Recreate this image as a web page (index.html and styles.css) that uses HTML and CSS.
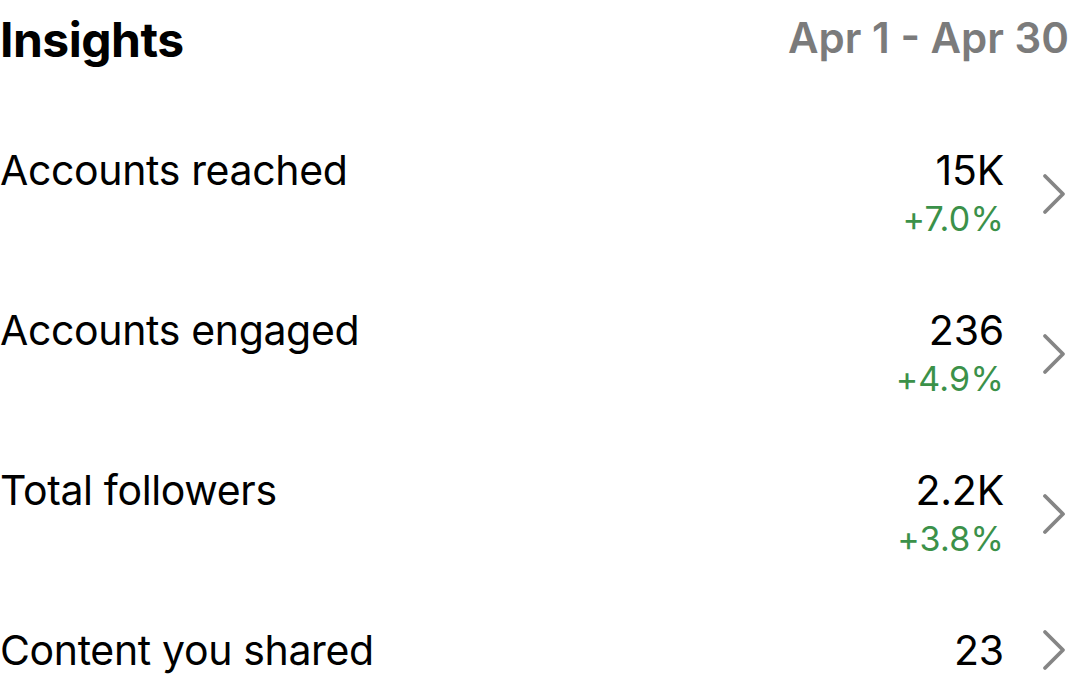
FILE: index.html
```html
<!DOCTYPE html>
<html lang="en">
<head>
<meta charset="utf-8">
<title>Insights</title>
<link rel="stylesheet" href="styles.css">
</head>
<body>
<div class="page">
  <header class="header">
    <h1 class="title">Insights</h1>
    <div class="range">Apr 1 - Apr 30</div>
  </header>
  <ul class="list">
    <li class="row">
      <span class="label">Accounts reached</span>
      <div class="right">
        <div class="values">
          <span class="value">15K</span>
          <span class="delta">+7.0%</span>
        </div>
        <svg class="chev" viewBox="0 0 24 42" width="24" height="42"><path d="M3 3 L21 21 L3 39" /></svg>
      </div>
    </li>
    <li class="row">
      <span class="label">Accounts engaged</span>
      <div class="right">
        <div class="values">
          <span class="value">236</span>
          <span class="delta">+4.9%</span>
        </div>
        <svg class="chev" viewBox="0 0 24 42" width="24" height="42"><path d="M3 3 L21 21 L3 39" /></svg>
      </div>
    </li>
    <li class="row">
      <span class="label">Total followers</span>
      <div class="right">
        <div class="values">
          <span class="value">2.2K</span>
          <span class="delta">+3.8%</span>
        </div>
        <svg class="chev" viewBox="0 0 24 42" width="24" height="42"><path d="M3 3 L21 21 L3 39" /></svg>
      </div>
    </li>
    <li class="row row-last">
      <span class="label">Content you shared</span>
      <div class="right">
        <div class="values">
          <span class="value">23</span>
        </div>
        <svg class="chev" viewBox="0 0 24 42" width="24" height="42"><path d="M3 3 L21 21 L3 39" /></svg>
      </div>
    </li>
  </ul>
</div>
</body>
</html>
```
FILE: styles.css
```css
html, body {
  margin: 0;
  padding: 0;
  background: #ffffff;
}
body {
  font-family: Inter, "Noto Sans", "Liberation Sans", sans-serif;
  color: #000000;
}
.page {
  width: 1070px;
  height: 690px;
  overflow: hidden;
  padding: 0 4px 0 0;
  box-sizing: border-box;
}
.header {
  display: flex;
  justify-content: space-between;
  align-items: flex-start;
  height: 126px;
  box-sizing: border-box;
}
.title {
  margin: 12px 0 0 0;
  font-size: 48px;
  font-weight: 700;
  line-height: 56px;
  letter-spacing: -0.5px;
}
.range {
  margin-top: 10px;
  margin-right: -3px;
  font-size: 42px;
  font-weight: 600;
  line-height: 56px;
  color: #7b7b7b;
}
.list {
  list-style: none;
  margin: 0;
  padding: 0;
}
.row {
  display: flex;
  justify-content: space-between;
  align-items: flex-start;
  height: 160px;
  padding-top: 20px;
  box-sizing: border-box;
}
.row-last {
  height: auto;
}
.label {
  font-size: 41px;
  line-height: 48px;
  letter-spacing: -0.35px;
}
.right {
  display: flex;
  align-items: center;
  gap: 38px;
}
.values {
  display: flex;
  flex-direction: column;
  align-items: flex-end;
}
.value {
  font-size: 41px;
  line-height: 48px;
  letter-spacing: -0.2px;
}
.delta {
  margin-top: 3px;
  font-size: 34px;
  line-height: 44px;
  letter-spacing: 0.2px;
  color: #3b9149;
}
.chev {
  display: block;
  fill: none;
  stroke: #858585;
  stroke-width: 3.8;
  stroke-linecap: round;
  stroke-linejoin: round;
}
```
